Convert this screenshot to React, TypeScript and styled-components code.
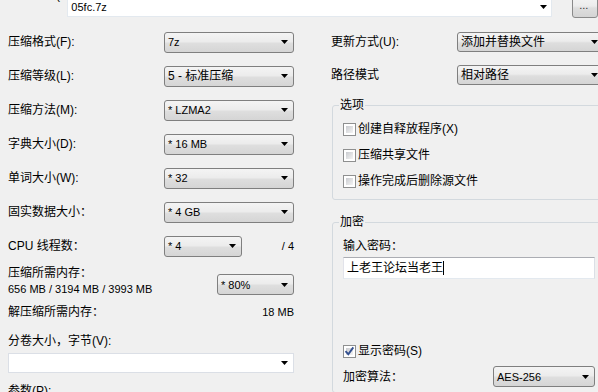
import React from "react";
import styled, { createGlobalStyle } from "styled-components";

const Global = createGlobalStyle`
  html, body { margin: 0; padding: 0; background: #f0f0f0; }
  body {
    font-family: "Liberation Sans", "Noto Sans CJK SC", sans-serif;
    font-size: 12px;
    color: #000;
  }
  * { box-sizing: border-box; }
`;

const Page = styled.div`
  width: 598px;
  height: 392px;
  overflow: hidden;
  background: #f0f0f0;
`;

const TopRow = styled.div`
  display: flex;
  align-items: flex-start;
  margin-top: -4px;
  height: 21px;
  padding-left: 8px;
`;

const TopLabel = styled.div`
  width: 60px;
  margin-top: -8px;
  line-height: 14px;
  white-space: nowrap;
  overflow: hidden;
`;

const FileBox = styled.div`
  width: 490px;
  height: 21px;
  background: #fff;
  border: 1px solid #e3e9ef;
  display: flex;
  align-items: center;
  justify-content: space-between;
  padding: 0 4px 0 3px;
  font-size: 11px;
`;

const BrowseButton = styled.div`
  margin-left: 20px;
  width: 26px;
  height: 22px;
  border: 1px solid #8a8a8a;
  border-radius: 3px;
  background: linear-gradient(#f4f4f4, #ececec 45%, #dedede 55%, #d4d4d4);
  font-size: 11px;
  line-height: 14px;
  padding-left: 6px;
  padding-top: 1px;
  color: #333;
`;

const Columns = styled.div`
  display: grid;
  grid-template-columns: 286px 273px;
  column-gap: 37px;
  padding-left: 8px;
  margin-top: 8px;
`;

const Col = styled.div`
  display: flex;
  flex-direction: column;
`;

const FieldRow = styled.div<{ $h?: number; $mt?: number; $w?: number; $ml?: number }>`
  display: flex;
  align-items: center;
  height: ${(p) => p.$h ?? 34}px;
  margin-top: ${(p) => p.$mt ?? 0}px;
  margin-left: ${(p) => p.$ml ?? 0}px;
  ${(p) => (p.$w ? `width: ${p.$w}px;` : "")}
`;

const Label = styled.div`
  flex: 1;
  line-height: 16px;
  white-space: nowrap;
`;

const Combo = styled.div<{ $w: number; $h?: number; $white?: boolean; $mt?: number; $mb?: number }>`
  flex-shrink: 0;
  width: ${(p) => p.$w}px;
  height: ${(p) => p.$h ?? 21}px;
  margin-top: ${(p) => p.$mt ?? 0}px;
  margin-bottom: ${(p) => p.$mb ?? 0}px;
  display: flex;
  align-items: center;
  justify-content: space-between;
  padding: 0 5px 0 3px;
  border: 1px solid ${(p) => (p.$white ? "#dbdfe6" : "#7f7f7f")};
  border-radius: ${(p) => (p.$white ? 0 : 3)}px;
  background: ${(p) =>
    p.$white
      ? "#fff"
      : "linear-gradient(#f4f4f4 0%, #ececec 45%, #dedede 55%, #d5d5d5 100%)"};
`;

const ComboText = styled.span<{ $fs?: number }>`
  font-size: ${(p) => p.$fs ?? 12}px;
  line-height: 16px;
  white-space: nowrap;
`;

const Suffix = styled.div`
  width: 52px;
  text-align: right;
  font-size: 11px;
  line-height: 16px;
`;

const MemRow = styled.div`
  display: flex;
  align-items: flex-end;
  margin-top: 2px;
`;

const MemLabel = styled.div`
  flex: 1;
  line-height: 16px;
`;

const MemSub = styled.div`
  font-size: 11px;
  white-space: nowrap;
`;

const InfoValue = styled.div`
  font-size: 11px;
  line-height: 16px;
`;

const TextLine = styled.div<{ $mt?: number; $ml?: number }>`
  margin-top: ${(p) => p.$mt ?? 0}px;
  margin-left: ${(p) => p.$ml ?? 0}px;
  line-height: 16px;
  white-space: nowrap;
`;

const Group = styled.fieldset<{ $mt: number; $pt: number }>`
  margin: ${(p) => p.$mt}px 0 0 1px;
  padding: ${(p) => p.$pt}px 0 5px 6px;
  width: 272px;
  min-width: 0;
  border: 1px solid #d3d9de;
  border-radius: 3px;
`;

const Legend = styled.legend`
  padding: 0 1px;
  font-size: 12px;
  line-height: 14px;
`;

const CheckRow = styled.div<{ $h?: number; $mt?: number }>`
  display: flex;
  align-items: center;
  gap: 2px;
  height: ${(p) => p.$h ?? 26}px;
  margin-top: ${(p) => p.$mt ?? 0}px;
  margin-left: 4px;
  line-height: 16px;
  white-space: nowrap;
`;

const CheckBox = styled.span`
  flex-shrink: 0;
  width: 13px;
  height: 13px;
  border: 1px solid #8e8f8f;
  background: #fff;
  padding: 2px;
  display: inline-flex;
`;

const CheckInner = styled.span`
  flex: 1;
  display: flex;
  align-items: center;
  justify-content: center;
  background: linear-gradient(135deg, #c9cbcf, #f4f4f4);
`;

const PwBox = styled.div`
  margin: 3px 0 0 4px;
  width: 252px;
  height: 22px;
  background: #fff;
  border: 1px solid;
  border-color: #abadb3 #dbdfe6 #e3e9ef #e2e3ea;
  display: flex;
  align-items: center;
  padding-left: 3px;
  line-height: 16px;
`;

const Caret = styled.span`
  display: inline-block;
  width: 1px;
  height: 14px;
  background: #000;
`;

const Arrow = () => (
  <svg width="7" height="4" viewBox="0 0 7 4">
    <polygon points="0,0 7,0 3.5,4" fill="#000" />
  </svg>
);

const Check = ({ checked }: { checked?: boolean }) => (
  <CheckBox>
    <CheckInner>
      {checked && (
        <svg width="7" height="7" viewBox="0 0 7 7" style={{ overflow: "visible" }}>
          <path d="M-0.5 3.2 L2.3 6.2 L7.3 -0.6" fill="none" stroke="#34508f" strokeWidth="1.9" />
        </svg>
      )}
    </CheckInner>
  </CheckBox>
);

const SelectBox = ({
  w,
  text,
  fs,
  h,
  mb,
}: {
  w: number;
  text: string;
  fs?: number;
  h?: number;
  mb?: number;
}) => (
  <Combo $w={w} $h={h} $mb={mb}>
    <ComboText $fs={fs}>{text}</ComboText>
    <Arrow />
  </Combo>
);

export default function App() {
  return (
    <Page>
      <Global />
      <TopRow>
        <TopLabel>压缩文件(A):</TopLabel>
        <FileBox>
          <span>05fc.7z</span>
          <Arrow />
        </FileBox>
        <BrowseButton>...</BrowseButton>
      </TopRow>
      <Columns>
        <Col>
          <FieldRow>
            <Label>压缩格式(F):</Label>
            <SelectBox w={130} text="7z" fs={11} />
          </FieldRow>
          <FieldRow>
            <Label>压缩等级(L):</Label>
            <SelectBox w={130} text="5 - 标准压缩" />
          </FieldRow>
          <FieldRow>
            <Label>压缩方法(M):</Label>
            <SelectBox w={130} text="* LZMA2" fs={11} />
          </FieldRow>
          <FieldRow>
            <Label>字典大小(D):</Label>
            <SelectBox w={130} text="* 16 MB" fs={11} />
          </FieldRow>
          <FieldRow>
            <Label>单词大小(W):</Label>
            <SelectBox w={130} text="* 32" fs={11} />
          </FieldRow>
          <FieldRow>
            <Label>固实数据大小：</Label>
            <SelectBox w={130} text="* 4 GB" fs={11} />
          </FieldRow>
          <FieldRow>
            <Label>CPU 线程数：</Label>
            <SelectBox w={78} text="* 4" fs={11} />
            <Suffix>/ 4</Suffix>
          </FieldRow>
          <MemRow>
            <MemLabel>
              <div>压缩所需内存：</div>
              <MemSub>656 MB / 3194 MB / 3993 MB</MemSub>
            </MemLabel>
            <SelectBox w={77} text="* 80%" fs={11} mb={2} />
          </MemRow>
          <FieldRow $h={24} $mt={3}>
            <Label>解压缩所需内存：</Label>
            <InfoValue>18 MB</InfoValue>
          </FieldRow>
          <TextLine $mt={9}>分卷大小，字节(V):</TextLine>
          <Combo $w={286} $h={20} $white $mt={4}>
            <span />
            <Arrow />
          </Combo>
          <TextLine $mt={10}>参数(P):</TextLine>
        </Col>
        <Col>
          <FieldRow>
            <Label>更新方式(U):</Label>
            <SelectBox w={147} h={20} text="添加并替换文件" />
          </FieldRow>
          <FieldRow $h={32}>
            <Label>路径模式</Label>
            <SelectBox w={147} h={20} text="相对路径" />
          </FieldRow>
          <Group $mt={7} $pt={4}>
            <Legend>选项</Legend>
            <CheckRow>
              <Check />
              <span>创建自释放程序(X)</span>
            </CheckRow>
            <CheckRow>
              <Check />
              <span>压缩共享文件</span>
            </CheckRow>
            <CheckRow>
              <Check />
              <span>操作完成后删除源文件</span>
            </CheckRow>
          </Group>
          <Group $mt={15} $pt={9}>
            <Legend>加密</Legend>
            <TextLine $ml={4}>输入密码：</TextLine>
            <PwBox>
              <span>上老王论坛当老王</span>
              <Caret />
            </PwBox>
            <CheckRow $h={16} $mt={64}>
              <Check checked />
              <span>显示密码(S)</span>
            </CheckRow>
            <FieldRow $h={21} $mt={7} $ml={4} $w={252}>
              <Label>加密算法：</Label>
              <SelectBox w={102} text="AES-256" fs={11} />
            </FieldRow>
          </Group>
        </Col>
      </Columns>
    </Page>
  );
}
